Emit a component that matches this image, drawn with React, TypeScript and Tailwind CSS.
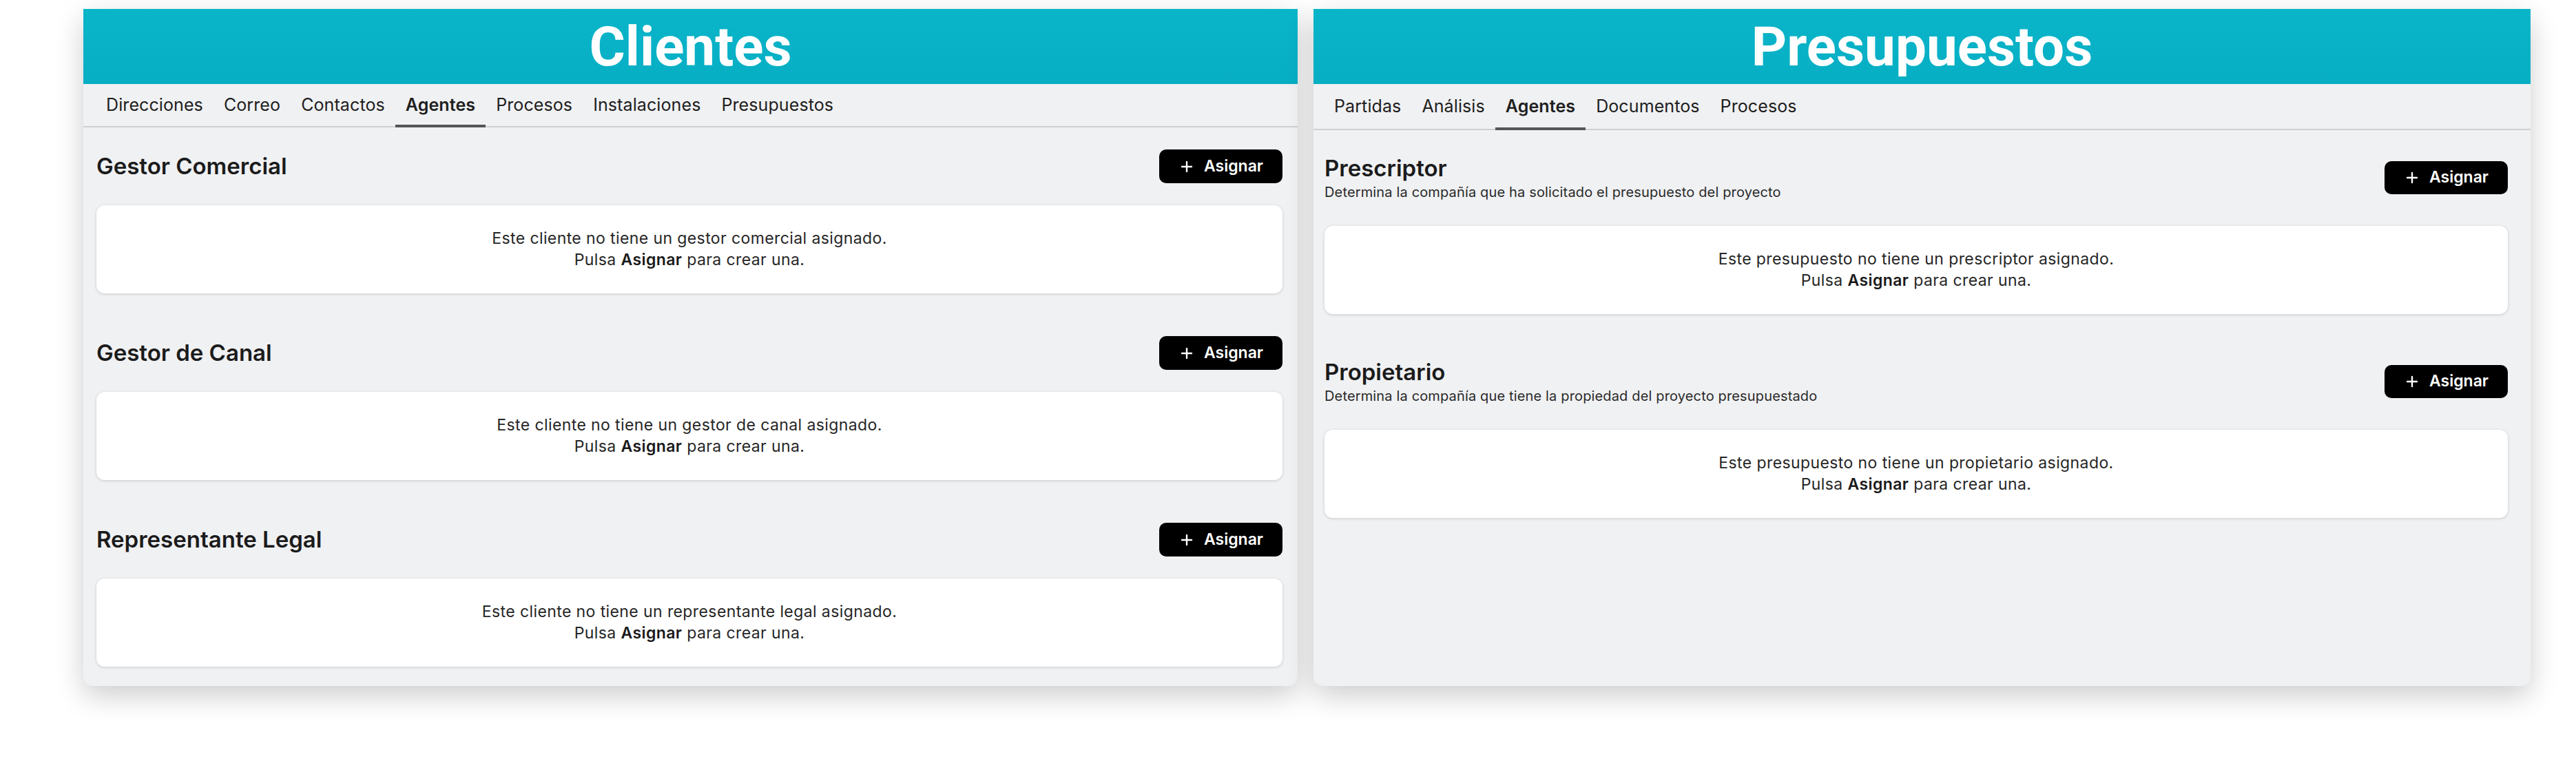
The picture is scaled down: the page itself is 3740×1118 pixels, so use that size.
import { Plus } from "lucide-react";

type Section = {
  title: string;
  subtitle?: string;
  empty: string;
};

const clienteTabs = [
  "Direcciones",
  "Correo",
  "Contactos",
  "Agentes",
  "Procesos",
  "Instalaciones",
  "Presupuestos",
];

const presupuestoTabs = ["Partidas", "Análisis", "Agentes", "Documentos", "Procesos"];

const clienteSections: Section[] = [
  {
    title: "Gestor Comercial",
    empty: "Este cliente no tiene un gestor comercial asignado.",
  },
  {
    title: "Gestor de Canal",
    empty: "Este cliente no tiene un gestor de canal asignado.",
  },
  {
    title: "Representante Legal",
    empty: "Este cliente no tiene un representante legal asignado.",
  },
];

const presupuestoSections: Section[] = [
  {
    title: "Prescriptor",
    subtitle: "Determina la compañía que ha solicitado el presupuesto del proyecto",
    empty: "Este presupuesto no tiene un prescriptor asignado.",
  },
  {
    title: "Propietario",
    subtitle: "Determina la compañía que tiene la propiedad del proyecto presupuestado",
    empty: "Este presupuesto no tiene un propietario asignado.",
  },
];

function AssignButton({ tall }: { tall?: boolean }) {
  return (
    <button
      className={`flex shrink-0 items-center gap-[13px] rounded-[10px] bg-black px-[28px] text-[23px] font-semibold text-white ${
        tall ? "h-[49px]" : "h-[48px]"
      }`}
    >
      <Plus size={24} strokeWidth={2.4} />
      <span>Asignar</span>
    </button>
  );
}

function EmptyCard({ text }: { text: string }) {
  return (
    <div className="flex h-[128px] w-full flex-col items-center justify-center rounded-[12px] bg-white text-[23px] leading-[31px] tracking-[0.4px] text-[#262626] shadow-[0_1px_4px_rgba(0,0,0,0.16)]">
      <span>{text}</span>
      <span>
        Pulsa <b className="font-semibold text-[#1a1a1a]">Asignar</b> para crear una.
      </span>
    </div>
  );
}

function Tabs({ tabs, active, height, offset }: { tabs: string[]; active: string; height: string; offset: string }) {
  return (
    <div className={`flex w-full flex-row border-b-2 border-[#cfd0d4] ${height} ${offset}`}>
      {tabs.map((tab) => (
        <div
          key={tab}
          className={`-mb-[2px] flex items-center border-b-[4px] px-[15px] pt-[2px] text-[25px] tracking-[0.1px] text-[#202020] ${
            tab === active ? "border-[#555555] font-semibold" : "border-transparent"
          }`}
        >
          {tab}
        </div>
      ))}
    </div>
  );
}

function Header({ title }: { title: string }) {
  return (
    <div className="flex h-[109px] w-full shrink-0 items-center justify-center bg-gradient-to-b from-[#0ab5c9] to-[#07aec4]">
      <h1 className="font-[Roboto] text-[80px] leading-none font-bold text-white">{title}</h1>
    </div>
  );
}

function ClientesPanel() {
  return (
    <div className="flex h-[983px] w-[1763px] shrink-0 flex-col overflow-hidden rounded-b-[14px] bg-[#f0f1f3] shadow-[0_14px_40px_rgba(0,0,0,0.2)]">
      <Header title="Clientes" />
      <Tabs tabs={clienteTabs} active="Agentes" height="h-[63px]" offset="px-[18px]" />

      {/* Agentes */}
      <div className="flex w-full flex-col gap-[62px] pt-[32px] pr-[22px] pl-[19px]">
        {clienteSections.map((s) => (
          <div key={s.title} className="flex w-full flex-col gap-[32px]">
            <div className="flex h-[49px] w-full flex-row items-center justify-between">
              <h2 className="text-[33px] font-semibold text-[#1b1b1b]">{s.title}</h2>
              <AssignButton tall />
            </div>
            <EmptyCard text={s.empty} />
          </div>
        ))}
      </div>
    </div>
  );
}

function PresupuestosPanel() {
  return (
    <div className="flex h-[983px] w-[1767px] shrink-0 flex-col overflow-hidden rounded-b-[14px] bg-[#f0f1f3] shadow-[0_14px_40px_rgba(0,0,0,0.2)]">
      <Header title="Presupuestos" />
      <Tabs tabs={presupuestoTabs} active="Agentes" height="h-[67px]" offset="px-[15px]" />

      {/* Agentes */}
      <div className="flex w-full flex-col gap-[62px] pt-[33px] pr-[33px] pl-[16px]">
        {presupuestoSections.map((s) => (
          <div key={s.title} className="flex w-full flex-col gap-[35px]">
            <div className="flex w-full flex-row items-center justify-between">
              <div className="flex flex-col">
                <h2 className="text-[33px] leading-[44px] font-semibold text-[#1b1b1b]">{s.title}</h2>
                <p className="text-[20px] leading-[27px] tracking-[0.15px] text-[#2a2a2a]">{s.subtitle}</p>
              </div>
              <AssignButton />
            </div>
            <EmptyCard text={s.empty} />
          </div>
        ))}
      </div>
    </div>
  );
}

export default function App() {
  return (
    <div className="flex h-[1118px] w-[3740px] flex-row gap-[23px] bg-white pt-[13px] pl-[121px] font-[Inter,'Noto_Sans',sans-serif]">
      <ClientesPanel />
      <PresupuestosPanel />
    </div>
  );
}
